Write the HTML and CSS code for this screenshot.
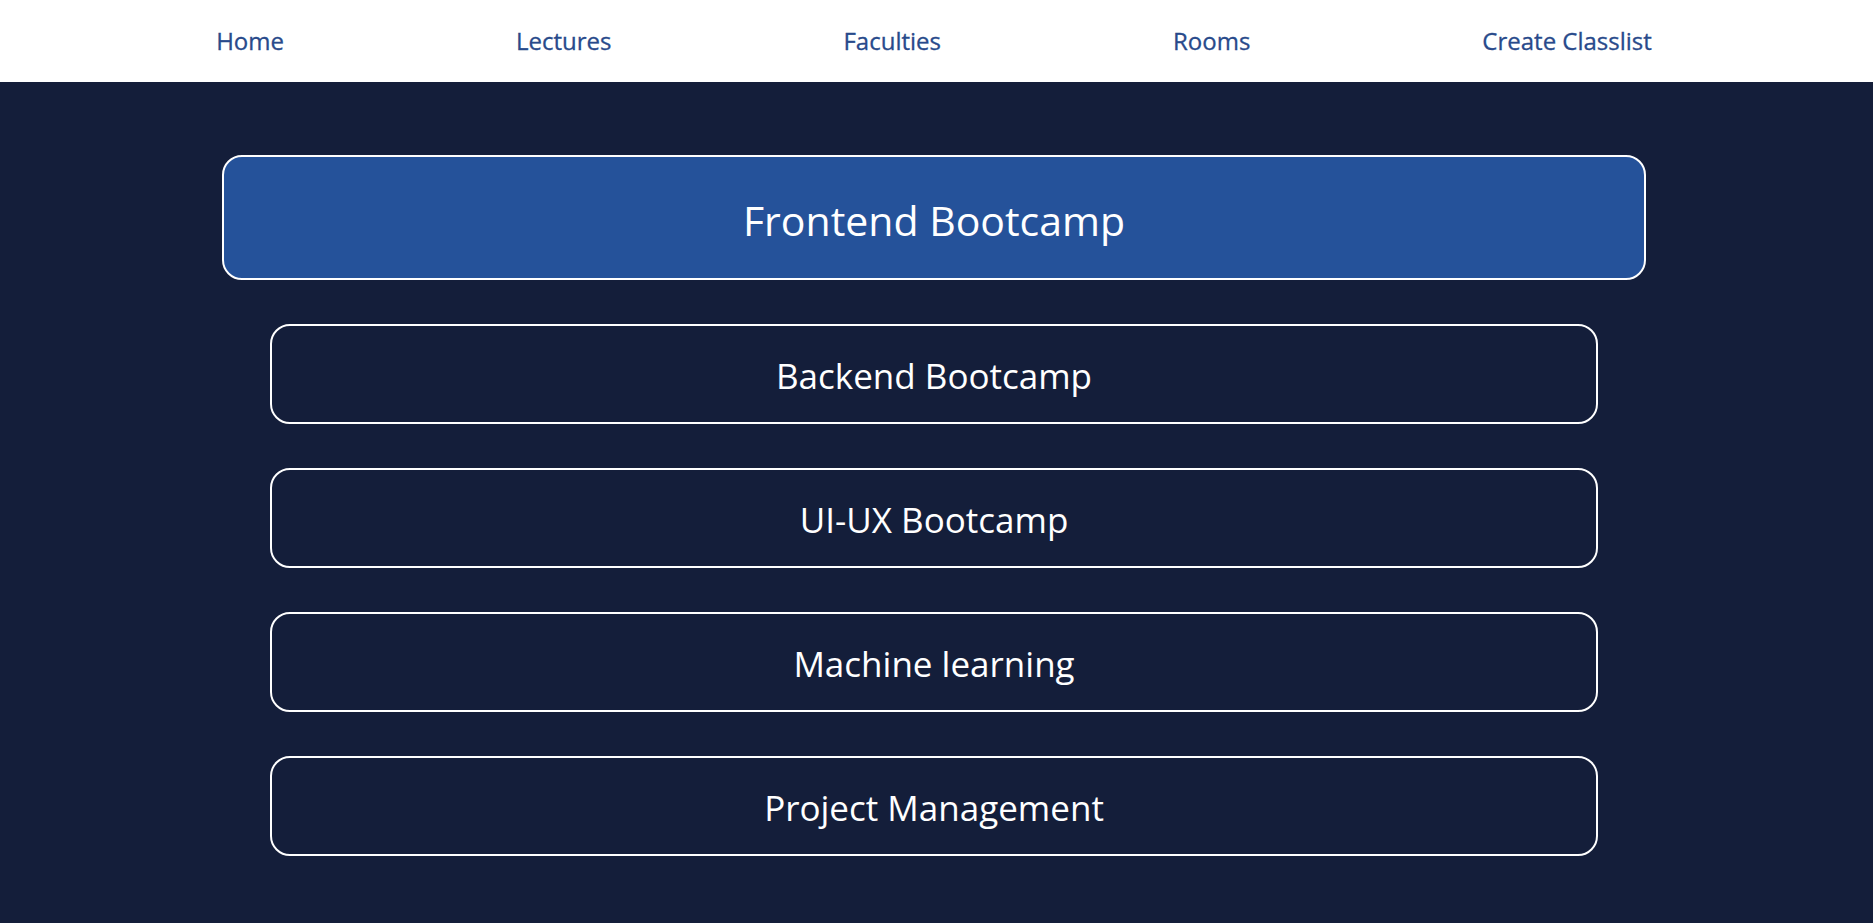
FILE: index.html
```html
<!DOCTYPE html>
<html lang="en">
<head>
<meta charset="utf-8">
<title>Classlist</title>
<link rel="stylesheet" href="styles.css">
</head>
<body>
<nav class="topnav">
  <a class="nav-link" href="#">Home</a>
  <a class="nav-link" href="#">Lectures</a>
  <a class="nav-link" href="#">Faculties</a>
  <a class="nav-link" href="#">Rooms</a>
  <a class="nav-link" href="#">Create Classlist</a>
</nav>
<main class="content">
  <div class="course-list">
    <div class="course course-active">Frontend Bootcamp</div>
    <div class="course">Backend Bootcamp</div>
    <div class="course">UI-UX Bootcamp</div>
    <div class="course">Machine learning</div>
    <div class="course">Project Management</div>
  </div>
</main>
</body>
</html>
```

FILE: styles.css
```css
html, body {
  margin: 0;
  padding: 0;
}
body {
  font-family: "Open Sans", "Noto Sans", sans-serif;
  background: #141e3a;
  min-height: 100vh;
}
.topnav {
  height: 82px;
  background: #ffffff;
  display: flex;
  align-items: center;
  justify-content: center;
  gap: 232px;
  padding-right: 5px;
  box-sizing: border-box;
}
.nav-link {
  color: #284a8b;
  text-decoration: none;
  font-size: 24px;
  font-weight: 400;
  line-height: 1;
  -webkit-text-stroke: 0.3px #284a8b;
}
.content {
  background: #141e3a;
  padding: 73px 0 60px;
}
.course-list {
  display: flex;
  flex-direction: column;
  align-items: center;
  gap: 44px;
  padding-right: 5px;
}
.course {
  box-sizing: border-box;
  width: 1328px;
  height: 100px;
  border: 2px solid #ffffff;
  border-radius: 20px;
  color: #ffffff;
  font-size: 35px;
  display: flex;
  align-items: center;
  justify-content: center;
  padding-top: 2px;
}
.course-active {
  width: 1424px;
  height: 125px;
  background: #25529a;
  font-size: 41px;
  padding-top: 4px;
}
```
